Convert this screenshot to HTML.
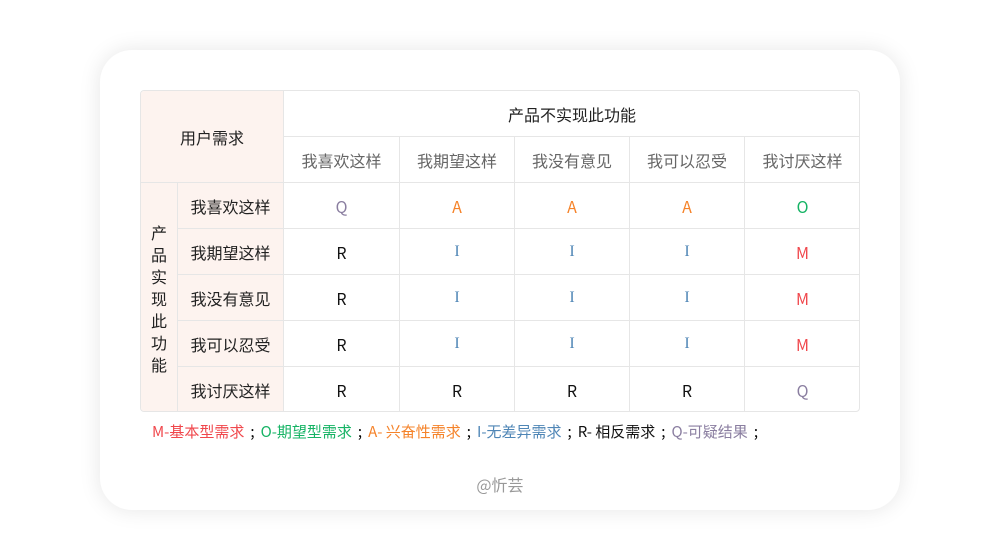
<!DOCTYPE html>
<html><head><meta charset="utf-8"><style>
body{margin:0;width:1000px;height:559px;background:#fff;font-family:"Noto Sans CJK SC",sans-serif;position:relative;overflow:hidden}
.card{position:absolute;left:100px;top:50px;width:800px;height:460px;border-radius:32px;background:#fff;box-shadow:0 0 22px rgba(0,0,0,0.10)}
.t{position:absolute;left:140px;top:90px;width:720px;height:322px;border:1px solid #e6e6e6;border-radius:4px;box-sizing:border-box;overflow:hidden}
.c{position:absolute;box-sizing:border-box;display:flex;align-items:center;justify-content:center;font-size:16px;line-height:20px;border-right:1px solid #e6e6e6;border-bottom:1px solid #e6e6e6;color:#222}
.p{background:#fdf3ef}
.g{color:#666}
.Q{color:#8a7ea0}.A{color:#f5832a}.O{color:#15b364}.I{color:#4f86b6;font-family:"Liberation Serif",serif}.M{color:#f0474c}.R{color:#111}
.leg{position:absolute;left:152px;top:422px;font-size:15px;line-height:20px;white-space:nowrap}
.s{margin:0 6px 0 6px}
</style></head><body>
<div class="card"></div>
<div class="t">
<div class="c p" style="left:0;top:0;width:143px;height:92px">用户需求</div>
<div class="c" style="left:143px;top:0;width:577px;height:46px">产品不实现此功能</div>
<div class="c p" style="left:0;top:92px;width:37px;height:230px;line-height:22px;text-align:center;padding:0 10px">产品实现此功能</div>
</div>
<script>
const t=document.querySelector('.t');
const cx=[143,259,374,489,604,720];
const hd=['我喜欢这样','我期望这样','我没有意见','我可以忍受','我讨厌这样'];
const d=[['Q','A','A','A','O'],['R','I','I','I','M'],['R','I','I','I','M'],['R','I','I','I','M'],['R','R','R','R','Q']];
let h='';
for(let j=0;j<5;j++)h+=`<div class="c g" style="left:${cx[j]}px;top:46px;width:${cx[j+1]-cx[j]}px;height:46px">${hd[j]}</div>`;
for(let i=0;i<5;i++){const y=92+46*i;
h+=`<div class="c p" style="left:37px;top:${y}px;width:106px;height:46px">${hd[i]}</div>`;
for(let j=0;j<5;j++)h+=`<div class="c ${d[i][j]}" style="left:${cx[j]}px;top:${y}px;width:${cx[j+1]-cx[j]}px;height:46px">${d[i][j]}</div>`;}
t.insertAdjacentHTML('beforeend',h);
</script>
<div class="leg"><span class="M">M-基本型需求</span><span class="s">;</span><span class="O">O-期望型需求</span><span class="s">;</span><span class="A">A- 兴奋性需求</span><span class="s">;</span><span style="color:#4f86b6">I-无差异需求</span><span class="s">;</span><span class="R">R- 相反需求</span><span class="s">;</span><span class="Q">Q-可疑结果</span><span class="s">;</span></div>
<div style="position:absolute;left:0;width:1000px;top:473px;text-align:center;font-size:16px;line-height:22px;color:#999">@忻芸</div>
</body></html>
